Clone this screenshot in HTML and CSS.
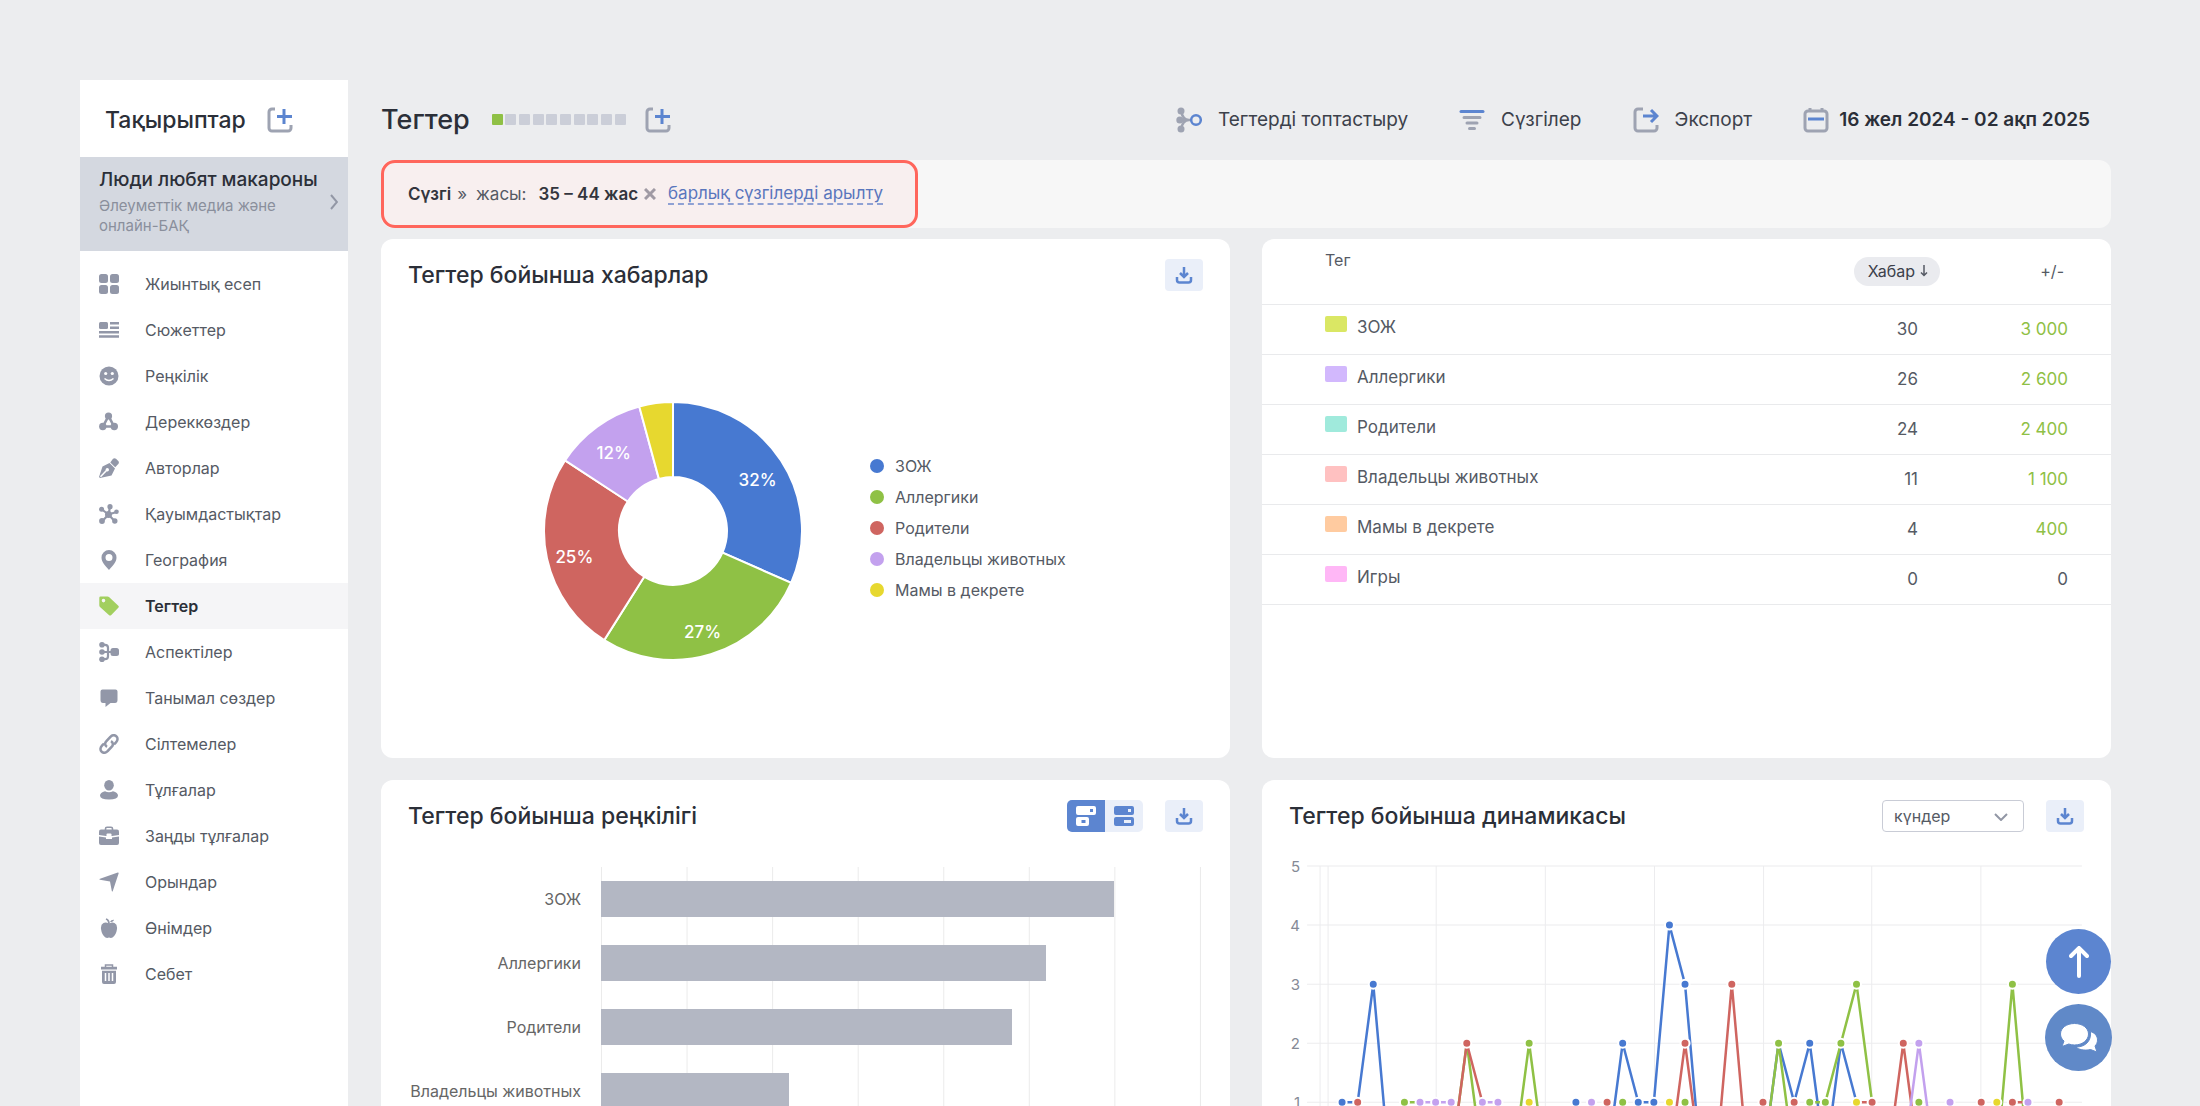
FILE: index.html
```html
<!DOCTYPE html>
<html lang="kk">
<head>
  <meta charset="UTF-8" />
  <meta name="viewport" content="width=device-width, initial-scale=1.0" />
  <title>Тегтер</title>
  <link rel="stylesheet" href="styles.css">
</head>
<body>
  <div class="app">
    <aside class="sidebar">
      <div class="sidebar-head">
        <h2>Тақырыптар</h2>
        <button class="icon-btn" aria-label="Тақырып қосу">
          <svg class="icon-lg" viewBox="0 0 26 26"><path class="line grey" d="M8 2H5a3 3 0 0 0-3 3v16a3 3 0 0 0 3 3h16a3 3 0 0 0 3-3v-3"/><path class="line blue" d="M17 2v15M10 9.500h15"/></svg>
        </button>
      </div>
      <a class="topic" href="#">
        <span class="topic-text">
          <strong>Люди любят макароны</strong>
          <small>Әлеуметтік медиа және онлайн-БАҚ</small>
        </span>
        <svg class="chevron" viewBox="0 0 8 16"><path d="M1 1l6 7-6 7"/></svg>
      </a>
      <nav class="menu">
        <a href="#"><svg viewBox="0 0 20 20"><rect x="0" y="0" width="9" height="9" rx="2.500"/><rect x="11" y="0" width="9" height="9" rx="2.500"/><rect x="0" y="11" width="9" height="9" rx="2.500"/><rect x="11" y="11" width="9" height="9" rx="2.500"/></svg>Жиынтық есеп</a>
        <a href="#"><svg viewBox="0 0 20 20"><rect x="0" y="2" width="9" height="7" rx="1.500"/><path d="M11 2h9v2.500h-9zM11 6.500h9V9h-9zM0 11h20v2.500H0zM0 15.200h20v2.600H0z"/></svg>Сюжеттер</a>
        <a href="#"><svg viewBox="0 0 20 20"><circle cx="10" cy="10" r="9.500"/><circle class="hole" cx="6.700" cy="7.500" r="1.600"/><circle class="hole" cx="13.300" cy="7.500" r="1.600"/><path class="cut" d="M5.500 12.500q4.500 4 9 0"/></svg>Реңкілік</a>
        <a href="#"><svg viewBox="0 0 20 20"><path class="stroke" stroke-width="2.600" d="M9.500 4L4 14.500h11z"/><circle cx="9.500" cy="4" r="3.600"/><circle cx="3.800" cy="14.500" r="3.700"/><circle cx="15.300" cy="14.500" r="3.700"/></svg>Дереккөздер</a>
        <a href="#"><svg viewBox="0 0 20 20"><path d="M3.500 8.500L10.500 5l5.500 5.500-3.500 7L1 20 0 19z"/><path d="M11.300 4.500L14 .800q1.500-1.200 3 0l2.300 2.300q1.200 1.500 0 3L16.200 9.200z"/><path class="cut" d="M1.500 18.800l6.200-6.500"/><circle class="hole" cx="8.300" cy="11.800" r="1.700"/></svg>Авторлар</a>
        <a href="#"><svg viewBox="0 0 20 20"><path class="stroke" stroke-width="2.200" d="M9.500 10.500L11 3M9.500 10.500L3 5.500M9.500 10.500L17.500 8M9.500 10.500L3.500 17M9.500 10.500l6 6.500"/><circle cx="9.500" cy="10.500" r="3.500"/><circle cx="11" cy="2.700" r="2.600"/><circle cx="2.600" cy="5.200" r="2.500"/><circle cx="17.500" cy="7.800" r="2.300"/><circle cx="3" cy="17" r="2.900"/><circle cx="15.800" cy="17" r="2.700"/></svg>Қауымдастықтар</a>
        <a href="#"><svg viewBox="0 0 20 20"><path fill-rule="evenodd" d="M10 0a7.500 7.500 0 0 0-7.500 7.500C2.500 12 6 15.500 10 20c4-4.500 7.500-8 7.500-12.500A7.500 7.500 0 0 0 10 0zm0 4a3.500 3.500 0 1 1 0 7 3.500 3.500 0 0 1 0-7z"/></svg>География</a>
        <a href="#" class="active"><svg viewBox="0 0 20 20"><path fill-rule="evenodd" d="M1.500 .500H8.500q1 0 1.800.700l9 8.500q1 1 0 2l-7 7.200q-1.200 1-2.400 0L1 11Q.300 10.300.300 9.300V1.700Q.400.500 1.500.500zM4.500 2.800a1.800 1.800 0 1 0 0 3.600 1.800 1.800 0 0 0 0-3.600z"/></svg>Тегтер</a>
        <a href="#"><svg viewBox="0 0 20 20"><path class="stroke" stroke-width="2.200" d="M3 2.800h3q3 0 3 3v8.400q0 3-3 3H3M3 10h11"/><circle cx="3" cy="2.800" r="2.800"/><circle cx="3" cy="10" r="2.800"/><circle cx="3" cy="17.200" r="2.800"/><rect x="11.500" y="6" width="8.500" height="8" rx="2.500"/></svg>Аспектілер</a>
        <a href="#"><svg viewBox="0 0 20 20"><path d="M3.500 1.500h13q2 0 2 2v8.500q0 3-2.500 3h-4.500L6.500 19V15H4q-2.500 0-2.500-3v-8.500q0-2 2-2z"/></svg>Танымал сөздер</a>
        <a href="#"><svg viewBox="0 0 20 20"><path class="stroke" stroke-width="2.600" d="M8 12.800c-2.500-1.500-2.300-4-.6-5.700l4-4.300c2-2 4.500-2 6-.500s1.500 4-.4 6L15 10.500M12 7.200c2.500 1.500 2.300 4 .6 5.700l-4 4.300c-2 2-4.500 2-6 .5s-1.500-4 .4-6L5 9.500"/></svg>Сілтемелер</a>
        <a href="#"><svg viewBox="0 0 20 20"><ellipse cx="10" cy="5.300" rx="4.800" ry="5.300"/><path d="M6 11.200q4 2 8 0 5 1.500 5 4.300 0 4-9 4t-9-4q0-2.800 5-4.300z"/></svg>Тұлғалар</a>
        <a href="#"><svg viewBox="0 0 20 20"><path class="stroke" stroke-width="1.600" d="M6.500 4V2.800q0-1.500 1.500-1.500h4q1.500 0 1.500 1.500V4"/><path d="M2 3.500h16q2 0 2 2V9l-7 1H7L0 9V5.500q0-2 2-2z"/><path d="M0 10.500l7 1V13h6v-1.500l7-1V17q0 2-2 2H2q-2 0-2-2z"/><rect class="hole" x="7.500" y="7.500" width="5" height="4" rx="1"/></svg>Заңды тұлғалар</a>
        <a href="#"><svg viewBox="0 0 20 20"><path d="M18.800.600q1-.200.800.800L13.800 19q-.500 1-1 0L11 9.500 1 7.800q-1.200-.500 0-1z"/></svg>Орындар</a>
        <a href="#"><svg viewBox="0 0 20 20"><path d="M10 5.800q3-2 5.500-.8Q18.500 6.500 18 11q-.8 6-4.500 8.600-1.500.8-3.500 0-2 .8-3.500 0Q2.800 17 2 11q-.5-4.500 2.500-6 2.500-1.200 5.500.8z"/><path class="stroke" stroke-width="1.800" d="M10 6q0-4-3-5"/><path d="M11 4q1-2.500 4-2.300Q14.500 4 11 4z"/></svg>Өнімдер</a>
        <a href="#"><svg viewBox="0 0 20 20"><path class="stroke" stroke-width="1.500" d="M6.500 3V1h7v2"/><path d="M2 2.800h16v2.700H2zM3 6.800h14V18q0 2-2 2H5q-2 0-2-2z"/><path class="cut" d="M6.500 9v8M10 9v8M13.500 9v8"/></svg>Себет</a>
      </nav>
    </aside>

    <main class="main">
      <header class="topbar">
        <h1>Тегтер</h1>
        <div class="steps"><i class="on"></i><i></i><i></i><i></i><i></i><i></i><i></i><i></i><i></i><i></i></div>
        <button class="icon-btn" aria-label="Тег қосу">
          <svg class="icon-lg" viewBox="0 0 26 26"><path class="line grey" d="M8 2H5a3 3 0 0 0-3 3v16a3 3 0 0 0 3 3h16a3 3 0 0 0 3-3v-3"/><path class="line blue" d="M17 2v15M10 9.500h15"/></svg>
        </button>
        <div class="actions">
          <button><svg class="icon-lg" viewBox="0 0 26 26"><path class="line thin grey" d="M5 4c1 5 3 9 8 9M5 22c1-5 3-9 8-9M3 13h12"/><circle class="fill-grey" cx="5" cy="4" r="3.500"/><circle class="fill-grey" cx="3.800" cy="13" r="3.500"/><circle class="fill-grey" cx="5" cy="22" r="3.500"/><circle class="line thin blue" cx="20" cy="13" r="4.800"/></svg>Тегтерді топтастыру</button>
          <button><svg class="icon-lg" viewBox="0 0 26 26"><path class="line round blue" d="M2 4.500h22"/><path class="line round grey" d="M5 10.500h16M8 16h10M10.500 21.500h5"/></svg>Сүзгілер</button>
          <button><svg class="icon-lg" viewBox="0 0 26 26"><path class="line grey" d="M10 2H5a3 3 0 0 0-3 3v16a3 3 0 0 0 3 3h16a3 3 0 0 0 3-3v-3"/><path class="line blue" d="M10 9h14M18 3l6 6-6 6"/></svg>Экспорт</button>
          <button class="date"><svg class="icon-lg" viewBox="0 0 26 26"><rect class="line grey" x="2" y="4" width="22" height="20" rx="3"/><path class="line grey" d="M7 1v3M19 1v3"/><path class="line blue" d="M5 12h16"/></svg>16 жел 2024 - 02 ақп 2025</button>
        </div>
      </header>

      <div class="filterbar">
        <div class="filter-active">
          <b>Сүзгі</b>
          <span class="sep">»</span>
          <span>жасы:</span>
          <b class="value">35 – 44 жас</b>
          <button class="remove" aria-label="Жою"><svg viewBox="0 0 12 12"><path d="M1 1l10 10M11 1L1 11"/></svg></button>
          <a href="#">барлық сүзгілерді арылту</a>
        </div>
      </div>

      <div class="cards">
        <section class="card">
          <div class="card-head">
            <h3>Тегтер бойынша хабарлар</h3>
            <button class="tool" aria-label="Жүктеу"><svg viewBox="0 0 18 18"><path d="M9 1v9M5 7l4 4 4-4M2 11v3q0 2.500 2.500 2.500h9q2.500 0 2.500-2.500v-3"/></svg></button>
          </div>
          <div class="donut-row">
            <svg class="donut" id="donut" viewBox="-130 -130 260 260"></svg>
            <ul class="legend">
              <li class="c-blue">ЗОЖ</li>
              <li class="c-green">Аллергики</li>
              <li class="c-red">Родители</li>
              <li class="c-purple">Владельцы животных</li>
              <li class="c-yellow">Мамы в декрете</li>
            </ul>
          </div>
        </section>

        <section class="card">
          <table class="tags">
            <thead>
              <tr><th class="name">Тег</th><th><button class="sort">Хабар <svg viewBox="0 0 8 12"><path d="M4 0v10.500M1 7.500l3 3 3-3"/></svg></button></th><th class="delta">+/-</th></tr>
            </thead>
            <tbody>
              <tr><td class="name"><i class="t1"></i>ЗОЖ</td><td>30</td><td class="up">3 000</td></tr>
              <tr><td class="name"><i class="t2"></i>Аллергики</td><td>26</td><td class="up">2 600</td></tr>
              <tr><td class="name"><i class="t3"></i>Родители</td><td>24</td><td class="up">2 400</td></tr>
              <tr><td class="name"><i class="t4"></i>Владельцы животных</td><td>11</td><td class="up">1 100</td></tr>
              <tr><td class="name"><i class="t5"></i>Мамы в декрете</td><td>4</td><td class="up">400</td></tr>
              <tr><td class="name"><i class="t6"></i>Игры</td><td>0</td><td>0</td></tr>
            </tbody>
          </table>
        </section>

        <section class="card">
          <div class="card-head">
            <h3>Тегтер бойынша реңкілігі</h3>
            <div class="toggle">
              <button class="on" aria-label="Сан"><svg viewBox="0 0 20 20"><path fill-rule="evenodd" d="M2 0h16q2 0 2 2v5q0 2-2 2H2Q0 9 0 7V2q0-2 2-2zm12 3v3h3V3zM2 11h9q2 0 2 2v5q0 2-2 2H2q-2 0-2-2v-5q0-2 2-2zm3.500 3v3h4v-3z"/></svg></button>
              <button aria-label="Пайыз"><svg viewBox="0 0 20 20"><path fill-rule="evenodd" d="M2 0h16q2 0 2 2v5q0 2-2 2H2Q0 9 0 7V2q0-2 2-2zm12 3v3h3V3zM2 11h16q2 0 2 2v5q0 2-2 2H2q-2 0-2-2v-5q0-2 2-2zm8 3v3h7v-3z"/></svg></button>
            </div>
            <button class="tool" aria-label="Жүктеу"><svg viewBox="0 0 18 18"><path d="M9 1v9M5 7l4 4 4-4M2 11v3q0 2.500 2.500 2.500h9q2.500 0 2.500-2.500v-3"/></svg></button>
          </div>
          <div class="bars">
            <div class="bar-row"><span>ЗОЖ</span><div class="track"><div class="bar" style="width: 85.71%"></div></div></div>
            <div class="bar-row"><span>Аллергики</span><div class="track"><div class="bar" style="width: 74.29%"></div></div></div>
            <div class="bar-row"><span>Родители</span><div class="track"><div class="bar" style="width: 68.57%"></div></div></div>
            <div class="bar-row"><span>Владельцы животных</span><div class="track"><div class="bar" style="width: 31.43%"></div></div></div>
          </div>
        </section>

        <section class="card">
          <div class="card-head">
            <h3>Тегтер бойынша динамикасы</h3>
            <div class="select">
              <select aria-label="Кезең"><option>күндер</option></select>
              <svg viewBox="0 0 14 8"><path d="M1 1l6 6 6-6"/></svg>
            </div>
            <button class="tool" aria-label="Жүктеу"><svg viewBox="0 0 18 18"><path d="M9 1v9M5 7l4 4 4-4M2 11v3q0 2.500 2.500 2.500h9q2.500 0 2.500-2.500v-3"/></svg></button>
          </div>
          <svg class="dynamics" id="dynamics" viewBox="0 0 794 310"></svg>
        </section>
      </div>
    </main>
  </div>

  <div class="floating">
    <button class="to-top" aria-label="Жоғары"><svg viewBox="0 0 20 32"><path d="M10 30V3M2 10l8-8 8 8"/></svg></button>
    <button class="chat" aria-label="Чат"><svg viewBox="0 0 38 30"><path d="M30.500 8.500C35 10 37.500 13 37.500 17c0 2.500-1 4.500-2.500 6l2 6-6.500-2.500C24 28 18.500 26.500 16 24c9 0 15.500-5.500 14.500-15.500z"/><path d="M14.500.500c8 0 14 4.500 14 10.500s-6 11-14 11c-2 0-4-.3-5.700-1L2 23.500l2-5.500C1.800 16.200.500 13.800.500 11 .500 5 6.500.500 14.500.500z"/></svg></button>
  </div>

  <script src="script.js"></script>
</body>
</html>
```
FILE: styles.css
```css
* {
  box-sizing: border-box;
}

body {
  margin: 0;
  background-color: #ecedef;
  color: #555a64;
  font-family: Inter, "Liberation Sans", sans-serif;
  font-size: 16px;
}

h1, h2, h3, ul {
  margin: 0;
  padding: 0;
  font-weight: 500;
  color: #2b2f38;
}

button {
  padding: 0;
  border: none;
  background: none;
  color: inherit;
  font: inherit;
  cursor: pointer;
}

a {
  color: inherit;
  text-decoration: none;
}

svg {
  display: block;
  flex-shrink: 0;
}

.app {
  display: grid;
  grid-template-columns: 268px minmax(0, 1fr);
  gap: 33px;
  height: 100vh;
  padding: 80px 89px 0 80px;
  overflow: hidden;
}

/* icons */
.icon-lg {
  width: 26px;
  height: 26px;
}

.line {
  fill: none;
  stroke-width: 3;
}

.thin {
  stroke-width: 2.500;
}

.round {
  stroke-linecap: round;
}

.grey {
  stroke: #9ea3b2;
}

.blue {
  stroke: #5c85d0;
}

.fill-grey {
  fill: #9ea3b2;
}

/* sidebar */
.sidebar {
  background-color: #fff;
}

.sidebar-head {
  display: flex;
  align-items: center;
  gap: 21px;
  height: 77px;
  padding: 2px 25px 0;
}

.sidebar-head h2 {
  font-size: 23px;
}

.topic {
  display: flex;
  align-items: center;
  justify-content: space-between;
  height: 94px;
  padding: 0 10px 4px 19px;
  background-color: #d4d8e0;
}

.topic-text {
  display: flex;
  flex-direction: column;
  gap: 4px;
}

.topic strong {
  color: #2b2f38;
  font-size: 19px;
  font-weight: 500;
  line-height: 24px;
  white-space: nowrap;
}

.topic small {
  width: 200px;
  color: #8a8f9c;
  font-size: 15px;
  line-height: 20px;
}

.chevron {
  width: 8px;
  height: 16px;
  margin-left: -8px;
}

.chevron path {
  fill: none;
  stroke: #9297a5;
  stroke-width: 2;
}

.menu {
  display: flex;
  flex-direction: column;
  padding-top: 10px;
}

.menu a {
  display: flex;
  align-items: center;
  gap: 26px;
  height: 46px;
  padding-left: 19px;
}

.menu svg {
  width: 20px;
  height: 20px;
  fill: #9297a8;
}

.menu .stroke {
  fill: none;
  stroke: #9297a8;
}

.menu .hole {
  fill: #fff;
}

.menu .cut {
  fill: none;
  stroke: #fff;
  stroke-width: 1.500;
}

.menu .active {
  background-color: #f5f5f7;
  color: #2b2f38;
  font-weight: 600;
}

.menu .active svg {
  fill: #a2cf5f;
}

/* top bar */
.topbar {
  display: flex;
  align-items: center;
  height: 79px;
  margin-bottom: 1px;
}

.topbar h1 {
  margin-right: 22px;
  font-size: 27px;
}

.steps {
  display: flex;
  justify-content: space-between;
  width: 134px;
  margin-right: 19px;
}

.steps i {
  width: 11px;
  height: 11px;
  border-radius: 1px;
  background-color: #cbced8;
}

.steps .on {
  background-color: #8fc045;
}

.actions {
  display: flex;
  gap: 51px;
  margin-left: auto;
  padding-right: 21px;
  color: #3c414b;
  font-size: 19px;
}

.actions button {
  display: flex;
  align-items: center;
  gap: 16px;
}

.actions .date {
  gap: 10px;
  color: #2b2f38;
  font-weight: 600;
}

/* filter bar */
.filterbar {
  display: flex;
  height: 68px;
  margin-bottom: 11px;
  border-radius: 12px;
  background-color: #f7f7f7;
}

.filter-active {
  display: flex;
  align-items: center;
  padding: 0 32px 0 24px;
  border: 3px solid #ff665c;
  border-radius: 14px;
  background-color: #f8efef;
  font-size: 17px;
}

.filter-active b {
  color: #33353d;
  font-weight: 600;
}

.filter-active .sep {
  margin: 0 9px 0 6px;
}

.filter-active .value {
  margin: 0 6px 0 12px;
}

.filter-active a {
  margin-left: 12px;
  border-bottom: 2px dashed #8fa1d4;
  color: #5a76bd;
}

.remove svg {
  width: 12px;
  height: 12px;
}

.remove path {
  stroke: #a09aa4;
  stroke-width: 3;
}

/* cards */
.cards {
  display: grid;
  grid-template-columns: repeat(2, minmax(0, 1fr));
  grid-template-rows: 519px auto;
  gap: 22px 32px;
}

.card {
  display: flex;
  flex-direction: column;
  border-radius: 12px;
  background-color: #fff;
}

.card-head {
  display: flex;
  align-items: center;
  height: 72px;
  padding: 0 27px;
}

.card-head h3 {
  margin-right: auto;
  font-size: 23px;
}

.tool {
  display: grid;
  place-items: center;
  width: 38px;
  height: 32px;
  margin-left: 22px;
  border-radius: 4px;
  background-color: #eaeff9;
}

.tool svg {
  width: 18px;
  height: 18px;
}

.tool path {
  fill: none;
  stroke: #5c85d0;
  stroke-width: 2.500;
}

.toggle {
  display: flex;
  overflow: hidden;
  border-radius: 5px;
  background-color: #eaeff9;
}

.toggle button {
  display: grid;
  place-items: center;
  width: 38px;
  height: 32px;
  color: #5c85d0;
}

.toggle .on {
  background-color: #5c85d0;
  color: #fff;
}

.toggle svg {
  width: 20px;
  height: 20px;
  fill: currentColor;
}

.select {
  position: relative;
}

.select select {
  width: 142px;
  height: 32px;
  padding: 0 11px;
  border: 1px solid #c9ccd6;
  border-radius: 4px;
  background-color: #fff;
  color: #555a64;
  font: inherit;
  appearance: none;
}

.select svg {
  position: absolute;
  top: 13px;
  right: 16px;
  width: 14px;
  height: 8px;
  pointer-events: none;
}

.select path {
  fill: none;
  stroke: #9297a5;
  stroke-width: 2;
}

/* donut */
.donut-row {
  display: flex;
  flex: 1;
  align-items: center;
  padding: 0 0 7px 162px;
}

.donut {
  width: 260px;
  height: 260px;
}

.donut path {
  fill: var(--c);
  stroke: #fff;
  stroke-width: 2;
}

.donut text {
  fill: #fff;
  font-size: 17px;
  font-weight: 500;
  text-anchor: middle;
}

.legend {
  display: flex;
  flex-direction: column;
  gap: 7px;
  margin-left: 67px;
  padding-bottom: 7px;
  color: #555a64;
  font-weight: 400;
  line-height: 24px;
  list-style: none;
}

.legend li {
  display: flex;
  align-items: center;
  gap: 11px;
}

.legend li::before {
  content: "";
  width: 14px;
  height: 14px;
  border-radius: 50%;
  background-color: var(--c);
}

.c-blue { --c: #4779d1; }
.c-green { --c: #8fc145; }
.c-red { --c: #cf6560; }
.c-purple { --c: #c3a1ee; }
.c-yellow { --c: #e7d82f; }

/* table */
.tags {
  width: 100%;
  border-collapse: collapse;
  font-size: 17px;
}

.tags th {
  height: 65px;
  padding: 0;
  border-bottom: 1px solid #e9eaec;
  font-size: 16px;
  font-weight: 400;
  text-align: right;
}

.tags td {
  width: 150px;
  height: 50px;
  padding: 0 43px 0 0;
  border-bottom: 1px solid #e9eaec;
  text-align: right;
}

.tags th:nth-child(2) {
  padding-right: 21px;
}

.tags th.delta {
  padding-right: 47px;
}

.tags .name {
  width: auto;
  padding: 0 0 5px 63px;
  text-align: left;
}

.tags th.name {
  padding-bottom: 22px;
}

.tags i {
  display: inline-block;
  width: 22px;
  height: 16px;
  margin-right: 10px;
  border-radius: 2px;
  vertical-align: 1px;
}

.t1 { background-color: #dae764; }
.t2 { background-color: #d2b8fd; }
.t3 { background-color: #a0eadc; }
.t4 { background-color: #ffc1c1; }
.t5 { background-color: #ffcba0; }
.t6 { background-color: #ffb7f6; }

.tags .up {
  color: #8fc045;
}

.sort {
  display: inline-flex;
  align-items: center;
  gap: 5px;
  height: 29px;
  padding: 0 12px 0 14px;
  border-radius: 15px;
  background-color: #eaebef;
  color: #3c414b;
}

.sort svg {
  width: 8px;
  height: 12px;
}

.sort path {
  fill: none;
  stroke: #555a64;
  stroke-width: 1.500;
}

/* bars */
.bars {
  padding: 15px 29px 0 27px;
  color: #666;
}

.bar-row {
  display: grid;
  grid-template-columns: 173px 1fr;
  gap: 20px;
  align-items: center;
}

.bar-row span {
  text-align: right;
  white-space: nowrap;
}

.track {
  display: flex;
  align-items: center;
  height: 64px;
  border-right: 1px solid #ebebeb;
  background-image: linear-gradient(to right, #ebebeb 1px, transparent 1px);
  background-size: calc(100% / 7) 100%;
}

.bar {
  height: 36px;
  background-color: #b3b7c3;
}

/* line chart */
.dynamics {
  width: calc(100% - 54px);
  margin: 0 27px;
}

.dynamics .grid {
  stroke: #ececee;
}

.dynamics text {
  fill: #858a96;
  font-size: 15px;
  text-anchor: end;
}

.dynamics polyline {
  fill: none;
  stroke: var(--c);
  stroke-width: 2.500;
}

.dynamics circle {
  fill: var(--c);
  stroke: #fff;
  stroke-width: 2;
}

/* floating buttons */
.floating {
  position: fixed;
  right: 88px;
  bottom: 35px;
  display: flex;
  flex-direction: column;
  align-items: center;
  gap: 10px;
}

.floating button {
  display: grid;
  place-items: center;
  border-radius: 50%;
}

.to-top {
  width: 65px;
  height: 65px;
  background-color: #5c85d0;
}

.to-top svg {
  width: 20px;
  height: 32px;
}

.to-top path {
  fill: none;
  stroke: #fff;
  stroke-width: 4;
  stroke-linecap: round;
}

.chat {
  width: 67px;
  height: 67px;
  background-color: #6089c8;
}

.chat svg {
  width: 38px;
  height: 30px;
}

.chat path {
  fill: #fff;
  stroke: #6089c8;
  stroke-width: 1;
}
```
FILE: script.js
```js
// donut: value, colour class, label
const shares = [
  [30, 'c-blue', '32%'],
  [26, 'c-green', '27%'],
  [24, 'c-red', '25%'],
  [11, 'c-purple', '12%'],
  [4, 'c-yellow', '']
];

function polar(r, share) {
  const a = share * 2 * Math.PI;
  return [r * Math.sin(a), -r * Math.cos(a)];
}

function drawDonut() {
  const total = shares.reduce((sum, s) => sum + s[0], 0);
  let from = 0;
  let html = '';
  let labels = '';
  shares.forEach(([value, cls, label]) => {
    const to = from + value / total;
    html += `<path class="${cls}" d="M${polar(129, from)} A129 129 0 0 1 ${polar(129, to)} L${polar(54, to)} A54 54 0 0 0 ${polar(54, from)}Z"/>`;
    const [x, y] = polar(101, (from + to) / 2);
    labels += `<text x="${x}" y="${y + 10}">${label}</text>`;
    from = to;
  });
  document.getElementById('donut').innerHTML = html + labels;
}

// line chart: [day, value] pairs, zero on the days between
const series = {
  'c-blue': [[0, 1], [1, 1], [2, 3], [15, 1], [18, 2], [19, 1], [20, 1], [21, 4], [22, 3], [28, 2], [29, 1], [30, 2], [32, 2], [33, 1]],
  'c-green': [[4, 1], [5, 1], [8, 2], [12, 2], [18, 1], [22, 1], [28, 2], [30, 1], [31, 1], [32, 2], [33, 3], [34, 1], [37, 1], [43, 3]],
  'c-red': [[1, 1], [8, 2], [9, 1], [17, 1], [22, 2], [25, 3], [27, 1], [29, 1], [33, 1], [34, 1], [36, 2], [41, 1], [43, 1], [44, 1], [46, 1]],
  'c-purple': [[5, 1], [6, 1], [7, 1], [9, 1], [10, 1], [16, 1], [37, 2], [39, 1], [44, 1]],
  'c-yellow': [[12, 1], [21, 1], [33, 1], [42, 1]]
};

// points that lie under another series
const hidden = ['c-blue1,1', 'c-blue28,2', 'c-blue29,1', 'c-blue32,2', 'c-blue33,1', 'c-green5,1', 'c-green8,2', 'c-green34,1', 'c-red9,1', 'c-red33,1', 'c-red44,1'];

function drawDynamics() {
  const px = day => 53 + day * 15.57;
  const py = value => 309 - value * 59;
  let html = '';
  for (let v = 1; v <= 5; v++) {
    html += `<line class="grid" x1="18" x2="792" y1="${py(v)}" y2="${py(v)}"/><text x="11" y="${py(v) + 6}">${v}</text>`;
  }
  [31, 39, 147, 256, 365, 474, 582, 691].forEach(x => {
    html += `<line class="grid" x1="${x}" x2="${x}" y1="14" y2="310"/>`;
  });
  let dots = '';
  Object.entries(series).forEach(([cls, points]) => {
    const values = Array(48).fill(0);
    points.forEach(([day, value]) => {
      values[day] = value;
      if (!hidden.includes(cls + day + ',' + value)) {
        dots += `<circle class="${cls}" cx="${px(day)}" cy="${py(value)}" r="4.500"/>`;
      }
    });
    html += `<polyline class="${cls}" points="${values.map((v, i) => px(i) + ',' + py(v)).join(' ')}"/>`;
  });
  document.getElementById('dynamics').innerHTML = html + dots;
}

drawDonut();
drawDynamics();
```
